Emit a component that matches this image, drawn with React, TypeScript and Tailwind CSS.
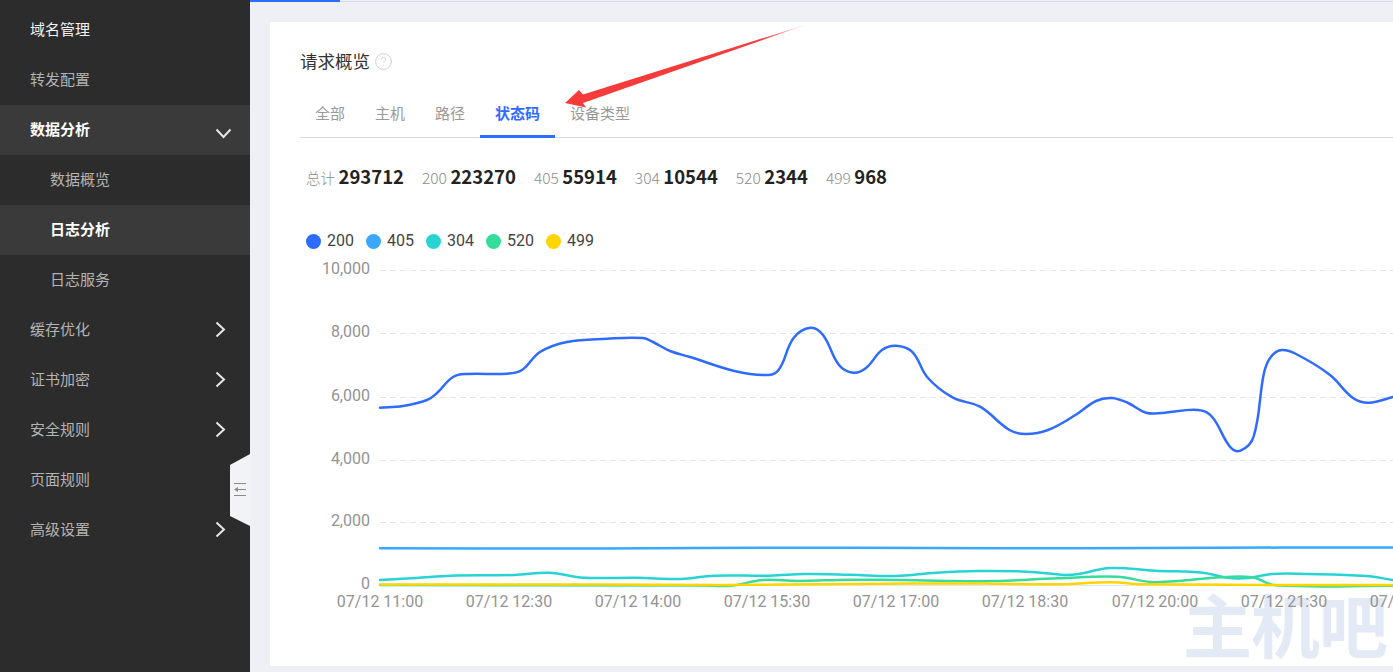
import { CircleHelp } from 'lucide-react'

const font = { fontFamily: '"Noto Sans CJK SC", sans-serif' }

type Pt = [number, number]

const menu = [
  { label: '域名管理', tone: 'first' },
  { label: '转发配置' },
  { label: '数据分析', tone: 'open', icon: 'down' },
  { label: '数据概览', child: true },
  { label: '日志分析', child: true, tone: 'active' },
  { label: '日志服务', child: true },
  { label: '缓存优化', icon: 'right' },
  { label: '证书加密', icon: 'right' },
  { label: '安全规则', icon: 'right' },
  { label: '页面规则' },
  { label: '高级设置', icon: 'right' },
]

const stats = [
  { label: '总计', value: '293712' },
  { label: '200', value: '223270' },
  { label: '405', value: '55914' },
  { label: '304', value: '10544' },
  { label: '520', value: '2344' },
  { label: '499', value: '968' },
]

const legend = [
  { label: '200', dot: 'bg-[#2e6bff]' },
  { label: '405', dot: 'bg-[#3ba7ff]' },
  { label: '304', dot: 'bg-[#28d3d3]' },
  { label: '520', dot: 'bg-[#36dc9c]' },
  { label: '499', dot: 'bg-[#ffd500]' },
]

const blue: Pt[] = [
  [380, 407.7], [403, 406], [427, 400], [437, 393], [453, 377], [467, 374], [507, 373.7], [522, 370], [540, 352],
  [567, 342], [607, 338.7], [643, 338], [653, 342], [670, 351], [690, 357], [734.5, 371], [764, 375], [778, 370.7],
  [793.6, 338], [810.5, 327.7], [823, 335], [839, 365], [853, 372.7], [866, 368], [882, 350], [896, 345.7], [912, 351.7],
  [928, 378], [953, 397.7], [980, 406.7], [1009.5, 430], [1026, 434], [1048, 430], [1075.5, 415], [1096, 401], [1112, 398],
  [1128, 403], [1146, 412.7], [1162, 413], [1198, 410], [1212, 416.7], [1230, 446.7], [1240.5, 450.7], [1253.6, 436.7],
  [1264, 373], [1271, 356.7], [1282, 350], [1298, 355], [1330, 375], [1353, 398], [1369, 402.7], [1393, 397],
]
const sky: Pt[] = [[380, 548.3], [600, 548.5], [700, 548], [850, 547.8], [1000, 548.2], [1150, 548], [1280, 547.6], [1393, 547.6]]
const teal: Pt[] = [
  [380, 580], [416, 578], [451, 575.7], [514, 575], [549, 572.7], [584, 577.7], [637, 577.7], [681, 579], [714, 575.7],
  [770, 575.7], [805, 574], [850, 574.7], [895, 576], [936.5, 572.7], [978, 571], [1027, 571.7], [1065, 575], [1078.5, 574],
  [1110, 568], [1155, 570.7], [1203, 572.7], [1227, 577.7], [1248, 578], [1272, 574], [1307, 574], [1366, 576], [1393, 580],
]
const green: Pt[] = [
  [380, 585], [700, 585.5], [731, 585.7], [763, 580], [798, 581], [850, 579.7], [895, 580], [936, 580.7], [995, 581],
  [1058, 578.3], [1117, 576.7], [1151, 582], [1182, 580.7], [1220, 577.3], [1252, 577.3], [1276, 585.3], [1393, 585.7],
]
const yellow: Pt[] = [
  [380, 584.6], [600, 584.6], [720, 585], [850, 584], [980, 583.4], [1058, 584.3], [1110, 582.3], [1144, 584.3], [1393, 585],
]

// spline through the points; handle length follows the segment so uneven spacing doesn't kink
function smooth(pts: Pt[]) {
  const tangent = (i: number): Pt => {
    const a = pts[Math.max(i - 1, 0)]
    const b = pts[Math.min(i + 1, pts.length - 1)]
    const len = Math.hypot(b[0] - a[0], b[1] - a[1]) || 1
    return [(b[0] - a[0]) / len, (b[1] - a[1]) / len]
  }
  let d = 'M' + pts[0][0] + ' ' + pts[0][1]
  for (let i = 0; i < pts.length - 1; i++) {
    const p1 = pts[i]
    const p2 = pts[i + 1]
    const h = Math.hypot(p2[0] - p1[0], p2[1] - p1[1]) * 0.38
    const t1 = tangent(i)
    const t2 = tangent(i + 1)
    d += ' C' + (p1[0] + t1[0] * h) + ' ' + (p1[1] + t1[1] * h) + ' ' + (p2[0] - t2[0] * h) + ' ' + (p2[1] - t2[1] * h) + ' ' + p2[0] + ' ' + p2[1]
  }
  return d
}

const grid = [
  { y: 270.5, label: '10,000' },
  { y: 333.5, label: '8,000' },
  { y: 397.5, label: '6,000' },
  { y: 460.5, label: '4,000' },
  { y: 522.5, label: '2,000' },
  { y: 585.5, label: '0' },
]
const ticks = [
  { x: 380, label: '07/12 11:00' },
  { x: 509, label: '07/12 12:30' },
  { x: 638, label: '07/12 14:00' },
  { x: 767, label: '07/12 15:30' },
  { x: 896, label: '07/12 17:00' },
  { x: 1025, label: '07/12 18:30' },
  { x: 1155, label: '07/12 20:00' },
  { x: 1284, label: '07/12 21:30' },
  { x: 1413, label: '07/12 23:00' },
]

function Chart() {
  return (
    <svg width="1123" height="380" viewBox="270 260 1123 380" className="block shrink-0">
      {grid.map((g) => (
        <g key={g.label}>
          <line x1="380" x2="1393" y1={g.y} y2={g.y} stroke="#e6e6e6" strokeWidth="1" strokeDasharray={g.label === '0' ? undefined : '6 4'} />
          <text x="370" y={g.y + 3.5} textAnchor="end" fontSize="16" fill="#939393" fontFamily="Roboto, sans-serif">{g.label}</text>
        </g>
      ))}
      {ticks.map((t) => (
        <text key={t.x} x={t.x} y="606.5" textAnchor="middle" fontSize="16" fill="#939393" fontFamily="Roboto, sans-serif">{t.label}</text>
      ))}
      <g fill="none" strokeLinecap="round" strokeLinejoin="round">
        <path d={smooth(blue)} stroke="#2e6bff" strokeWidth="2.5" />
        <path d={smooth(sky)} stroke="#3ba7ff" strokeWidth="2.5" />
        <path d={smooth(teal)} stroke="#28d3d3" strokeWidth="2.5" />
        <path d={smooth(green)} stroke="#36dc9c" strokeWidth="2.5" />
        <path d={smooth(yellow)} stroke="#ffd500" strokeWidth="2.5" />
      </g>
    </svg>
  )
}

function Chevron({ dir }: { dir: string }) {
  if (dir === 'down') {
    return (
      <svg width="17" height="11" viewBox="0 0 17 11" className="absolute left-[215px] top-[23px]" fill="none">
        <path d="M1.5 1.5L8.5 9L15.5 1.5" stroke="#e6e6e6" strokeWidth="2" />
      </svg>
    )
  }
  return (
    <svg width="11" height="17" viewBox="0 0 11 17" className="absolute left-[215px] top-4" fill="none">
      <path d="M1.5 1.5L9 8.5L1.5 15.5" stroke="#e6e6e6" strokeWidth="2" />
    </svg>
  )
}

function Sidebar() {
  return (
    <aside className="relative w-[250px] shrink-0 bg-[#2c2c2c] pt-[5px] text-[15px]">
      {menu.map((m) => (
        <div
          key={m.label}
          className={
            'relative flex h-[50px] items-center pb-0.5 ' +
            (m.child ? 'pl-[50px] ' : 'pl-[30px] ') +
            (m.tone === 'open' || m.tone === 'active' ? 'bg-[#3a3a3a] font-bold text-white ' : '') +
            (m.tone === 'first' ? 'text-[#f2f2f2] ' : '') +
            (!m.tone ? 'text-[#b4b4b4] ' : '')
          }
        >
          {m.label}
          {m.icon && <Chevron dir={m.icon} />}
        </div>
      ))}
      {/* collapse handle */}
      <svg width="20" height="72" viewBox="0 0 20 72" className="absolute right-0 top-[454px]">
        <path d="M20 0L0 11V62L20 72Z" fill="#f3f3f7" />
        <path d="M4 29.5H16M4 41.5H16M8 35.5H16" stroke="#8a8a8a" strokeWidth="1" fill="none" />
        <path d="M4 35.5L8 33V38Z" fill="#8a8a8a" />
      </svg>
    </aside>
  )
}

export default function App() {
  return (
    <div className="flex h-[672px] w-[1393px] overflow-hidden bg-[#eff0f5]" style={font}>
      <Sidebar />
      <main className="relative flex min-w-0 flex-1 flex-col pb-[6px] pl-5 pt-[22px]">
        <div className="absolute inset-x-0 top-0 h-0.5 border-b border-[#d5d8e5]">
          <div className="h-0.5 w-[90px] bg-[#2e6bff]" />
        </div>
        <section className="relative flex-1 overflow-hidden bg-white pl-[30px]">
          <div className="absolute bottom-[5px] left-[913px] text-[69px] font-bold leading-[76px] tracking-[-1px] whitespace-nowrap text-[#e3e9f5]">主机吧</div>
          <div className="relative">
            <div className="mt-7 flex h-6 items-center gap-1 pb-0.5">
              <h1 className="text-[17.5px] font-normal text-[#333]">请求概览</h1>
              <CircleHelp size={19} strokeWidth={1} className="text-[#c4c4c4]" />
            </div>
            <nav className="mt-4 flex h-12 border-b border-[#d9d9e0] text-[15px] text-[#999]">
              <span className="flex h-12 items-center px-[15px] pb-0.5">全部</span>
              <span className="flex h-12 items-center px-[15px] pb-0.5">主机</span>
              <span className="flex h-12 items-center px-[15px] pb-0.5">路径</span>
              <span className="flex h-12 items-center border-b-[3px] border-[#2e6bff] px-[15px] pt-px font-bold text-[#2e6bff]">状态码</span>
              <span className="flex h-12 items-center px-[15px] pb-0.5">设备类型</span>
            </nav>
            <div className="mt-[25px] flex h-7 items-center gap-[18px] pl-1.5">
              {stats.map((s) => (
                <div key={s.label} className="flex items-baseline gap-[3.5px]">
                  <span className={(s.label === '总计' ? 'text-[14.5px] ' : 'text-[15.5px] ') + 'font-light text-[#8c8c8c]'}>{s.label}</span>
                  <span className="text-[18.5px] font-bold text-[#222]">{s.value}</span>
                </div>
              ))}
            </div>
            <div className="mt-10 flex h-5 items-center pl-1.5">
              {legend.map((l) => (
                <div key={l.label} className="flex w-[60px] items-center gap-[6px]">
                  <span className={'h-[15px] w-[15px] rounded-full ' + l.dot} />
                  <span className="text-[16px] text-[#444]" style={{ fontFamily: 'Roboto, sans-serif' }}>{l.label}</span>
                </div>
              ))}
            </div>
            <div className="mt-[9px] -ml-[30px]">
              <Chart />
            </div>
          </div>
        </section>
        {/* red annotation arrow drawn over the screenshot */}
        <svg width="260" height="90" viewBox="560 20 260 90" className="absolute left-[310px] top-5">
          <defs>
            <linearGradient id="arrowFill" x1="566" y1="102" x2="808" y2="24" gradientUnits="userSpaceOnUse">
              <stop offset="0" stopColor="#f73b3b" />
              <stop offset="0.8" stopColor="#f73b3b" />
              <stop offset="1" stopColor="#f73b3b" stopOpacity="0.1" />
            </linearGradient>
          </defs>
          <path d="M565 103L579 90L583 94.5L808 24L583 103L586 107.5Z" fill="url(#arrowFill)" />
        </svg>
      </main>
    </div>
  )
}
